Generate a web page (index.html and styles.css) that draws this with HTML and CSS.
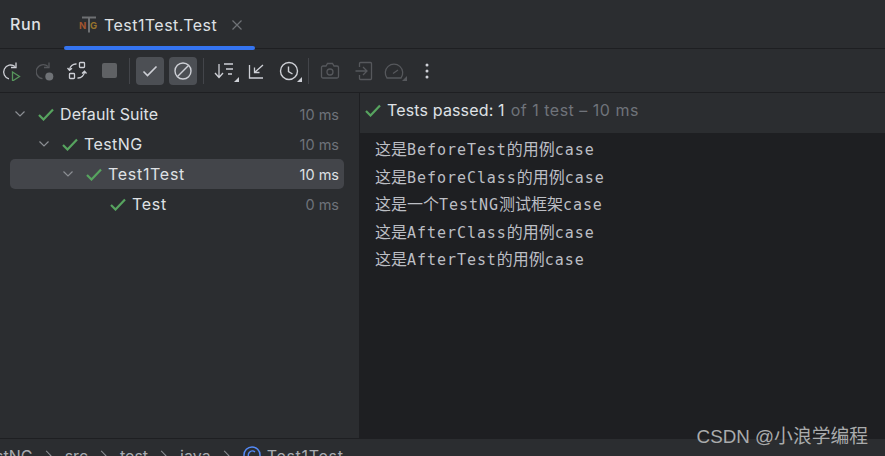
FILE: index.html
```html
<!DOCTYPE html>
<html lang="zh">
<head>
<meta charset="utf-8">
<title>Run</title>
<link rel="stylesheet" href="styles.css">
</head>
<body>
<div class="app">
  <header class="tabs">
    <span class="run-title">Run</span>
    <div class="tab">
      <span class="ng-icon"><svg width="20" height="18" viewBox="0 0 20 18"><path d="M3 1.500h14M10 1.500v15" stroke="#6e7073" stroke-width="2" fill="none"/></svg><span class="ng-n">N</span><span class="ng-g">G</span></span>
      <span class="tab-label">Test1Test.Test</span>
      <svg class="tab-close" width="10" height="10" viewBox="0 0 10 10"><path d="M.5.5l9 9M9.500.5l-9 9" stroke="#6f7276" stroke-width="1.200" fill="none"/></svg>
    </div>
  </header>
  <nav class="toolbar">
    <svg class="tool t-rerun" width="20" height="20" viewBox="0 0 20 20" fill="none"><path d="M13 5.500A7 7 0 1 0 7 17.800" stroke="#ced0d6" stroke-width="1.300"/><path d="M14 1.500v5h-5" stroke="#ced0d6" stroke-width="1.300"/><path d="M10.500 11l7 4.500-7 4.500z" stroke="#57965c" stroke-width="1.300"/></svg>
    <svg class="tool t-next" width="20" height="20" viewBox="0 0 20 20" fill="none"><path d="M12 5.500A7 7 0 1 0 6.500 17.600" stroke="#55575b" stroke-width="1.300"/><path d="M13 1.500v5h-5" stroke="#55575b" stroke-width="1.300"/><circle cx="13.300" cy="15.500" r="4" fill="#6f7276"/></svg>
    <svg class="tool t-swap" width="20" height="20" viewBox="0 0 20 20" fill="none" stroke="#ced0d6" stroke-width="1.300"><rect x="12.500" y="1.500" width="5" height="5" rx=".8"/><rect x="2.500" y="12.500" width="5" height="5" rx=".8"/><path d="M9.500 3A6.500 6.500 0 0 0 2.500 9M.5 7l2 2.300L5 7.300M10.500 17a6.500 6.500 0 0 0 7-6.500M15 12.500l2.500-2.300 2 2.300"/></svg>
    <span class="stop"></span>
    <span class="sep sep-a"></span>
    <span class="toggle t-check"><svg width="16" height="16" viewBox="0 0 16 16" fill="none"><path d="M1.500 8.500l4 4 9-9" stroke="#ced0d6" stroke-width="1.600"/></svg></span>
    <span class="toggle t-ban"><svg width="18" height="18" viewBox="0 0 18 18" fill="none" stroke="#ced0d6" stroke-width="1.400"><circle cx="9" cy="9" r="8"/><path d="M3.500 14.500l11-11"/></svg></span>
    <span class="sep sep-b"></span>
    <span class="tool-wrap t-sort"><svg width="22" height="20" viewBox="0 0 22 20" fill="none" stroke="#ced0d6" stroke-width="1.300"><path d="M5 3v13M1 12l4 4.500L9 12M10 3h9M12 8h7M14 13h4"/></svg><i class="corner"></i></span>
    <span class="tool-wrap t-collapse"><svg width="20" height="20" viewBox="0 0 20 20" fill="none" stroke="#ced0d6" stroke-width="1.300"><path d="M2.500 4v13h13.500M16 4L7.500 11.500M7.500 6.500v5h5"/></svg></span>
    <span class="tool-wrap t-clock"><svg width="20" height="20" viewBox="0 0 20 20" fill="none" stroke="#ced0d6" stroke-width="1.400"><circle cx="10" cy="10" r="8.500"/><path d="M9.500 5.500v5l4 2.500"/></svg><i class="corner"></i></span>
    <span class="sep sep-c"></span>
    <svg class="tool t-cam" width="20" height="18" viewBox="0 0 20 18" fill="none" stroke="#56585c" stroke-width="1.300"><path d="M1.500 5.500a1.500 1.500 0 0 1 1.500-1.500h3l1.500-2.500h5L14 4h3a1.500 1.500 0 0 1 1.500 1.500v9A1.500 1.500 0 0 1 17 16H3a1.500 1.500 0 0 1-1.500-1.500z"/><circle cx="10" cy="10" r="3"/></svg>
    <svg class="tool t-import" width="18" height="20" viewBox="0 0 18 20" fill="none" stroke="#56585c" stroke-width="1.300"><path d="M4.500 6V2.500a1 1 0 0 1 1-1h10a1 1 0 0 1 1 1v15a1 1 0 0 1-1 1h-10a1 1 0 0 1-1-1V14M.5 10h11M8 6l4 4-4 4"/></svg>
    <span class="tool-wrap t-gauge"><svg width="20" height="18" viewBox="0 0 20 18" fill="none" stroke="#56585c" stroke-width="1.300"><path d="M3 16a8.700 8.700 0 1 1 14 0zM9 11.500l5-3.500"/></svg><i class="corner dim"></i></span>
    <svg class="tool t-more" width="4" height="16" viewBox="0 0 4 16" fill="#ced0d6"><circle cx="2" cy="2" r="1.500"/><circle cx="2" cy="8" r="1.500"/><circle cx="2" cy="14" r="1.500"/></svg>
  </nav>
  <main class="split">
    <section class="tree">
      <div class="row lvl0"><svg class="chev" width="10" height="6" viewBox="0 0 10 6"><path d="M.5.5L5 5 9.500.5" stroke="#8c8f94" stroke-width="1.200" fill="none"/></svg><svg class="ok" width="16" height="13" viewBox="0 0 16 13"><path d="M1 7l4.500 4.500L15 1.500" stroke="#57a45f" stroke-width="2.200" fill="none"/></svg><span class="name">Default Suite</span><span class="time">10 ms</span></div>
      <div class="row lvl1"><svg class="chev" width="10" height="6" viewBox="0 0 10 6"><path d="M.5.5L5 5 9.500.5" stroke="#8c8f94" stroke-width="1.200" fill="none"/></svg><svg class="ok" width="16" height="13" viewBox="0 0 16 13"><path d="M1 7l4.500 4.500L15 1.500" stroke="#57a45f" stroke-width="2.200" fill="none"/></svg><span class="name wide">TestNG</span><span class="time">10 ms</span></div>
      <div class="row lvl2 selected"><svg class="chev" width="10" height="6" viewBox="0 0 10 6"><path d="M.5.5L5 5 9.500.5" stroke="#8c8f94" stroke-width="1.200" fill="none"/></svg><svg class="ok" width="16" height="13" viewBox="0 0 16 13"><path d="M1 7l4.500 4.500L15 1.500" stroke="#57a45f" stroke-width="2.200" fill="none"/></svg><span class="name wider">Test1Test</span><span class="time">10 ms</span></div>
      <div class="row lvl3"><svg class="ok" width="16" height="13" viewBox="0 0 16 13"><path d="M1 7l4.500 4.500L15 1.500" stroke="#57a45f" stroke-width="2.200" fill="none"/></svg><span class="name wider">Test</span><span class="time">0 ms</span></div>
    </section>
    <section class="results">
      <div class="status"><svg class="ok" width="16" height="13" viewBox="0 0 16 13"><path d="M1 7l4.500 4.500L15 1.500" stroke="#57a45f" stroke-width="2.200" fill="none"/></svg><span class="passed">Tests passed: 1</span><span class="of">of 1 test – 10 ms</span></div>
      <div class="console">
        <div class="line">这是<b>BeforeTest</b>的用例<b>case</b></div>
        <div class="line">这是<b>BeforeClass</b>的用例<b>case</b></div>
        <div class="line">这是一个<b>TestNG</b>测试框架<b>case</b></div>
        <div class="line">这是<b>AfterClass</b>的用例<b>case</b></div>
        <div class="line">这是<b>AfterTest</b>的用例<b>case</b></div>
      </div>
    </section>
  </main>
  <footer class="crumbs">
    <span>stNG</span><i class="arrow"></i><span>src</span><i class="arrow"></i><span>test</span><i class="arrow"></i><span>java</span><i class="arrow"></i>
    <svg class="class-icon" width="20" height="20" viewBox="0 0 20 20" fill="none"><circle cx="10" cy="10" r="8" stroke="#548af7" stroke-width="1.500"/><path d="M13 7a4 4 0 1 0 0 6" stroke="#548af7" stroke-width="1.500"/></svg>
    <span class="crumb-class">Test1Test</span>
  </footer>
</div>
<div class="watermark">CSDN @小浪学编程</div>
</body>
</html>
```
FILE: styles.css
```css
* { box-sizing: border-box; }
html, body { margin: 0; height: 456px; overflow: hidden; background: #2b2d30; }
body { position: relative; font-family: Inter, "Noto Sans CJK SC", sans-serif; color: #dfe1e5; }
svg { display: block; flex: none; }

.app { display: flex; flex-direction: column; width: 885px; height: 456px; }

.tabs { flex: none; height: 49px; display: flex; padding-left: 10px; border-bottom: 1px solid #1e1f22; }
.run-title { width: 54px; font-size: 16px; letter-spacing: .6px; font-weight: 500; line-height: 49px; }
.tab { position: relative; width: 191px; display: flex; align-items: center; padding-left: 15px; height: 49px; }
.tab::after { content: ""; position: absolute; left: 0; right: 0; bottom: -1px; height: 4px; background: #3574f0; border-radius: 2px; }
.ng-icon { position: relative; width: 20px; height: 18px; margin-right: 5px; font-size: 9.500px; font-weight: 700; }
.ng-n { position: absolute; left: 0; top: 4px; color: #a3552f; }
.ng-g { position: absolute; left: 11px; top: 4px; color: #96732c; }
.tab-label { font-size: 16px; letter-spacing: .45px; white-space: nowrap; }
.tab-close { margin-left: 15px; }

.toolbar { flex: none; height: 44px; display: flex; align-items: center; border-bottom: 1px solid #1e1f22; }
.t-rerun { margin-left: 2px; }
.t-next { margin-left: 14px; }
.t-swap { margin-left: 11px; }
.stop { width: 15px; height: 15px; margin-left: 15px; background: #5f6164; border-radius: 2px; }
.sep { width: 1px; height: 26px; background: #43454a; flex: none; }
.sep-a { margin-left: 12px; }
.toggle { width: 28px; height: 28px; display: flex; align-items: center; justify-content: center; background: #4c4f54; border-radius: 4px; }
.t-check { margin-left: 6px; }
.t-ban { margin-left: 5px; }
.sep-b { margin-left: 6px; }
.tool-wrap { position: relative; display: block; flex: none; }
.corner { position: absolute; right: -3px; bottom: -1px; width: 0; height: 0; border-style: solid; border-width: 0 0 5px 5px; border-color: transparent transparent #ced0d6 transparent; }
.corner.dim { border-bottom-color: #56585c; }
.t-sort { margin-left: 10px; }
.t-collapse { margin-left: 11px; }
.t-clock { margin-left: 12px; }
.sep-c { margin-left: 9px; }
.t-cam { margin-left: 11px; }
.t-import { margin-left: 15px; }
.t-gauge { margin-left: 11px; }
.t-more { margin-left: 21px; }

.split { flex: 1; min-height: 0; display: flex; border-bottom: 1px solid #1e1f22; }
.tree { flex: none; width: 360px; padding: 6px 15px 0 10px; border-right: 1px solid #1e1f22; }
.row { height: 30px; display: flex; align-items: center; border-radius: 5px; font-size: 16px; letter-spacing: .1px; padding-right: 5px; }
.row .ok { margin-right: 6px; }
.row .chev { margin-right: 13px; }
.lvl0 { padding-left: 5px; }
.lvl1 { padding-left: 29px; }
.lvl2 { padding-left: 53px; }
.lvl3 { padding-left: 100px; }
.name { flex: 1; white-space: nowrap; }
.wide { letter-spacing: .4px; }
.wider { letter-spacing: .7px; }
.time { font-size: 14.500px; letter-spacing: 0; color: #6f737a; white-space: nowrap; }
.selected { background: #43454a; }
.selected .time { color: #dfe1e5; }

.results { flex: 1; min-width: 0; display: flex; flex-direction: column; }
.status { flex: none; height: 40px; display: flex; align-items: center; padding: 0 0 6px 5px; font-size: 16px; }
.status .ok { margin-right: 6px; }
.passed { margin-right: 6px; letter-spacing: .15px; }
.of { color: #6f737a; letter-spacing: .5px; }
.console { flex: 1; background: #1e1f22; padding: 2px 0 0 15px; font-family: "Noto Sans CJK SC", sans-serif; font-size: 16px; color: #bcbec4; }
.line { height: 27.500px; line-height: 27.500px; white-space: nowrap; }
.line b { font-family: "DejaVu Sans Mono", "Liberation Mono", monospace; font-size: 15px; font-weight: 400; letter-spacing: .95px; }

.crumbs { flex: none; height: 17px; display: flex; align-items: flex-start; padding-top: 8px; margin-left: -5px; font-size: 16px; line-height: 18px; color: #a8abb0; white-space: nowrap; }
.arrow { width: 7px; height: 7px; margin: 5px 15px 0 10px; border-top: 1.200px solid #8c8f94; border-right: 1.200px solid #8c8f94; transform: rotate(45deg); flex: none; }
.class-icon { margin: -2px 5px 0 -1px; }
.crumb-class { letter-spacing: .7px; }

.watermark { position: absolute; right: 17px; top: 425px; font-family: "Liberation Sans", "Noto Sans CJK SC", sans-serif; font-size: 18.800px; line-height: 24px; color: #a9abac; }
```
